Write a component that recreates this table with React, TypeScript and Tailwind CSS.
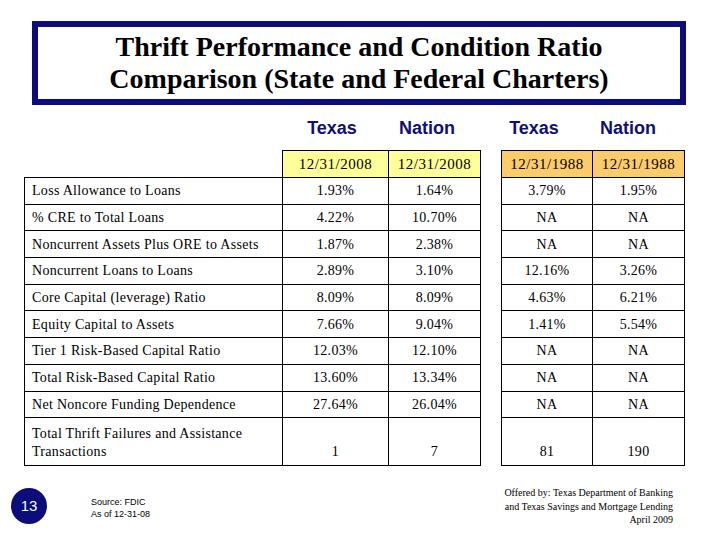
import React from 'react';

type Row = { label: React.ReactNode; values: string[]; tall?: boolean };

const rows: Row[] = [
  { label: 'Loss Allowance to Loans', values: ['1.93%', '1.64%', '3.79%', '1.95%'] },
  { label: '% CRE to Total Loans', values: ['4.22%', '10.70%', 'NA', 'NA'] },
  { label: 'Noncurrent Assets Plus ORE to Assets', values: ['1.87%', '2.38%', 'NA', 'NA'] },
  { label: 'Noncurrent Loans to Loans', values: ['2.89%', '3.10%', '12.16%', '3.26%'] },
  { label: 'Core Capital (leverage) Ratio', values: ['8.09%', '8.09%', '4.63%', '6.21%'] },
  { label: 'Equity Capital to Assets', values: ['7.66%', '9.04%', '1.41%', '5.54%'] },
  { label: 'Tier 1 Risk-Based Capital Ratio', values: ['12.03%', '12.10%', 'NA', 'NA'] },
  { label: 'Total Risk-Based Capital Ratio', values: ['13.60%', '13.34%', 'NA', 'NA'] },
  { label: 'Net Noncore Funding Dependence', values: ['27.64%', '26.04%', 'NA', 'NA'] },
  {
    label: (
      <>
        Total Thrift Failures and Assistance
        <br />
        Transactions
      </>
    ),
    values: ['1', '7', '81', '190'],
    tall: true,
  },
];

const serif = "font-['Liberation_Serif',serif]";
const sans = "font-['Liberation_Sans',Arial,sans-serif]";

export default function App() {
  return (
    <div className={`w-[720px] h-[540px] bg-white overflow-hidden text-black ${serif}`}>
      {/* Title */}
      <div className="mt-[21px] ml-[32px] w-[654px] h-[84px] border-[6px] border-[#0c0c7a] flex flex-col items-center justify-center">
        <div className="text-[28px] leading-[32px] font-bold text-center">
          Thrift Performance and Condition Ratio
          <br />
          Comparison (State and Federal Charters)
        </div>
      </div>

      {/* Column headings */}
      <div className={`mt-[10px] h-[26px] flex items-center pl-[287px] text-[18px] font-bold text-[#0f0f76] ${sans}`}>
        <div className="w-[90px] text-center">Texas</div>
        <div className="w-[90px] ml-[5px] text-center">Nation</div>
        <div className="w-[90px] ml-[17px] text-center">Texas</div>
        <div className="w-[90px] ml-[4px] text-center">Nation</div>
      </div>

      {/* Table */}
      <table className="mt-[9px] ml-[24px] border-collapse table-fixed w-[660px] text-[14px] tracking-[0.3px]">
        <colgroup>
          <col className="w-[258px]" />
          <col className="w-[106px]" />
          <col className="w-[92px]" />
          <col className="w-[21px]" />
          <col className="w-[91px]" />
          <col className="w-[92px]" />
        </colgroup>
        <tbody>
          <tr className="h-[27px]">
            <td />
            <td className="border border-black bg-[#ffff99] text-center text-[15px] tracking-[0.5px]">12/31/2008</td>
            <td className="border border-black bg-[#ffff99] text-center text-[15px] tracking-[0.5px]">12/31/2008</td>
            <td />
            <td className="border border-black bg-[#fccb6c] text-center text-[15px] tracking-[0.5px]">12/31/1988</td>
            <td className="border border-black bg-[#fccb6c] text-center text-[15px] tracking-[0.5px]">12/31/1988</td>
          </tr>
          {rows.map((r, i) => {
            const cell = r.tall
              ? 'border border-black text-center align-bottom pb-[4px] leading-[18px]'
              : 'border border-black text-center';
            return (
              <tr key={i} className={r.tall ? 'h-[48px]' : 'h-[26.7px]'}>
                <td
                  className={
                    r.tall
                      ? 'border border-black pl-[7px] align-bottom pb-[4px] leading-[18px]'
                      : 'border border-black pl-[7px]'
                  }
                >
                  {r.label}
                </td>
                <td className={cell}>{r.values[0]}</td>
                <td className={cell}>{r.values[1]}</td>
                <td />
                <td className={cell}>{r.values[2]}</td>
                <td className={cell}>{r.values[3]}</td>
              </tr>
            );
          })}
        </tbody>
      </table>

      {/* Footer */}
      <div className="mt-[22px] flex items-start">
        <div className={`ml-[11px] w-9 h-9 rounded-full bg-[#0c0c7a] text-white flex items-center justify-center text-[15px] ${sans}`}>
          13
        </div>
        <div className={`ml-[44px] mt-[8px] text-[9px] leading-[12px] ${sans}`}>
          Source: FDIC
          <br />
          As of 12-31-08
        </div>
        <div className="ml-auto mr-[47px] -mt-[2px] text-right text-[10px] leading-[13.5px]">
          Offered by: Texas Department of Banking
          <br />
          and Texas Savings and Mortgage Lending
          <br />
          April 2009
        </div>
      </div>
    </div>
  );
}
